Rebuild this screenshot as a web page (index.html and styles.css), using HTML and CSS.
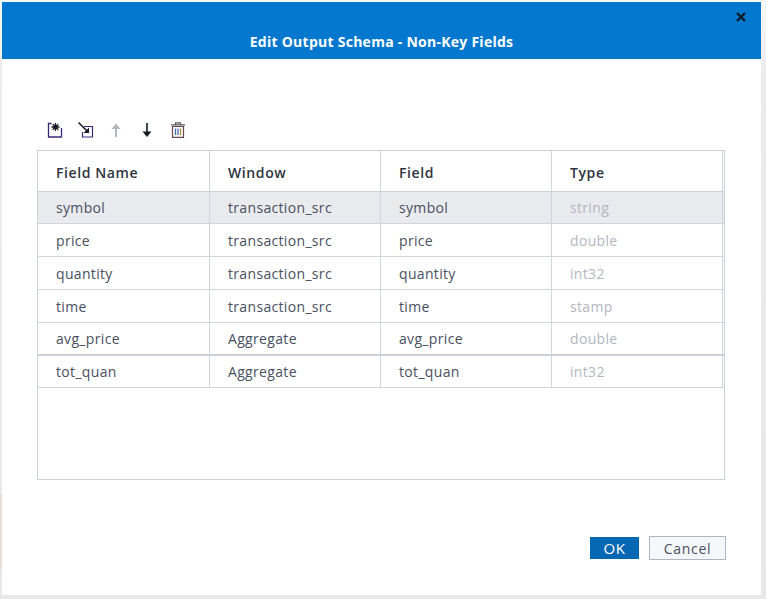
FILE: index.html
```html
<!DOCTYPE html>
<html lang="en">
<head>
    <meta charset="UTF-8">
    <title>Edit Output Schema - Non-Key Fields</title>
    <link rel="stylesheet" href="styles.css">
</head>
<body>
    <div class="page-strip"></div>
    <div class="dialog">
        <header class="dialog-head">
            <h2>Edit Output Schema - Non-Key Fields</h2>
            <svg class="close" width="12" height="12" viewBox="0 0 12 12"><path d="M2 2l8 8M10 2l-8 8" stroke="#0b1a28" stroke-width="2.4" fill="none"/></svg>
        </header>
        <div class="dialog-body">
            <div class="toolbar">
                <svg class="tool-new" width="16" height="16" viewBox="0 0 16 16" fill="none">
                    <path d="M4.500 1.500H1.500V15H14.500V6" stroke="#3b2a7a" stroke-width="1.300"/>
                    <path d="M8.500 1v8M4.500 5h8M5.700 2.200l5.600 5.600M11.300 2.200l-5.600 5.600" stroke="#101820" stroke-width="1.300"/>
                </svg>
                <svg class="tool-insert" width="16" height="16" viewBox="0 0 16 16" fill="none">
                    <path d="M6 4.500H14.500V15H4.500V10" stroke="#3b2a7a" stroke-width="1.200"/>
                    <path d="M0.500 0.500L10 10" stroke="#101820" stroke-width="1.500"/>
                    <path d="M11 5.500V11H5.500Z" fill="#101820"/>
                </svg>
                <svg class="tool-up" width="12" height="16" viewBox="0 0 12 16" fill="none">
                    <path d="M6 15V5" stroke="#b3b6bf" stroke-width="2"/>
                    <path d="M1.500 7L6 1.500L10.500 7Z" fill="#b3b6bf"/>
                </svg>
                <svg class="tool-down" width="12" height="16" viewBox="0 0 12 16" fill="none">
                    <path d="M6 1V11" stroke="#101820" stroke-width="1.600"/>
                    <path d="M1.500 9.500L6 15L10.500 9.500Z" fill="#101820"/>
                </svg>
                <svg class="tool-trash" width="16" height="16" viewBox="0 0 16 16" fill="none">
                    <path d="M5.500 2.500V0.800H10.500V2.500M1 2.800H15" stroke="#5a5560" stroke-width="1.200"/>
                    <path d="M2.500 4.500H13.500V15.300H2.500Z" stroke="#6a4a48" stroke-width="1.200"/>
                    <path d="M5.500 6.500V13M8 6.500V13" stroke="#3f6fb0" stroke-width="1.300"/>
                    <path d="M10.500 6.500V13" stroke="#b08a3a" stroke-width="1.300"/>
                </svg>
            </div>
            <div class="grid-box">
                <div class="row row-head">
                    <div>Field Name</div><div>Window</div><div>Field</div><div>Type</div>
                </div>
                <div class="row selected">
                    <div>symbol</div><div>transaction_src</div><div>symbol</div><div class="muted">string</div>
                </div>
                <div class="row">
                    <div>price</div><div>transaction_src</div><div>price</div><div class="muted">double</div>
                </div>
                <div class="row">
                    <div>quantity</div><div>transaction_src</div><div>quantity</div><div class="muted">int32</div>
                </div>
                <div class="row">
                    <div>time</div><div>transaction_src</div><div>time</div><div class="muted">stamp</div>
                </div>
                <div class="row row-thick">
                    <div>avg_price</div><div>Aggregate</div><div>avg_price</div><div class="muted">double</div>
                </div>
                <div class="row row-last">
                    <div>tot_quan</div><div>Aggregate</div><div>tot_quan</div><div class="muted">int32</div>
                </div>
            </div>
            <div class="actions">
                <button class="btn-ok">OK</button>
                <button class="btn-cancel">Cancel</button>
            </div>
        </div>
    </div>
</body>
</html>
```

FILE: styles.css
```css
html, body {
    height: 100%;
}
body {
    margin: 0;
    padding: 2px 5px 4px 2px;
    box-sizing: border-box;
    background: linear-gradient(#f9f9f9, #ececec 70px, #e8e8e8);
    font-family: "Open Sans", Lato, sans-serif;
    font-size: 14px;
    letter-spacing: 0.33px;
    color: #49505f;
    overflow: hidden;
}
.page-strip {
    position: absolute;
    left: 0;
    top: 494px;
    width: 2px;
    height: 75px;
    background-color: #e6ddd0;
}
.dialog {
    height: 593px;
    background-color: #fff;
    display: flex;
    flex-direction: column;
}
.dialog-head {
    height: 57px;
    flex: none;
    background-color: #0478ce;
    display: flex;
    align-items: flex-end;
    justify-content: center;
    position: relative;
}
.dialog-head h2 {
    margin: 0 0 8px;
    color: #fff;
    font-size: 14px;
    font-weight: 700;
    letter-spacing: 0.26px;
}
.close {
    position: absolute;
    top: 9px;
    right: 14px;
}
.dialog-body {
    flex: 1;
    padding: 63px 36px 0 35px;
    display: flex;
    flex-direction: column;
}
.toolbar {
    display: flex;
    align-items: center;
    height: 16px;
    padding-left: 10px;
    margin-bottom: 12px;
}
.tool-insert {
    margin-left: 15px;
}
.tool-up {
    margin-left: 16px;
}
.tool-down {
    margin-left: 19px;
}
.tool-trash {
    margin-left: 17px;
}
.grid-box {
    height: 330px;
    box-sizing: border-box;
    border: 1px solid #ccd0d8;
}
.row {
    display: grid;
    grid-template-columns: 172px 171px 171px 171px;
    height: 33px;
    box-sizing: border-box;
    border-bottom: 1px solid #d2d5dc;
}
.row > div {
    display: flex;
    align-items: center;
    padding-left: 18px;
    border-right: 1px solid #d2d5dc;
}
.row-head {
    height: 41px;
    border-bottom: 1px solid #ccd0d8;
    font-weight: 600;
    letter-spacing: 0.6px;
    color: #2e3440;
}
.row-head > div {
    padding-top: 2px;
}
.selected {
    height: 32px;
    background-color: #e9ebef;
}
.row-thick {
    border-bottom: 2px solid #ccd0d8;
}
.row-last {
    height: 32px;
}
.muted {
    color: #b3b7bf;
}
.actions {
    display: flex;
    justify-content: flex-end;
    align-items: center;
    gap: 10px;
    margin: 56px -1px 0 0;
}
button {
    font: inherit;
    box-sizing: border-box;
    cursor: pointer;
}
.btn-ok {
    width: 49px;
    height: 22px;
    padding: 0;
    border: none;
    background-color: #0668b2;
    color: #fff;
    font-size: 15px;
    letter-spacing: 0.5px;
}
.btn-cancel {
    width: 77px;
    height: 24px;
    padding: 0;
    border: 1px solid #b0b5c4;
    background-color: #f5f7fa;
    color: #49505f;
    letter-spacing: 0.7px;
}
```
